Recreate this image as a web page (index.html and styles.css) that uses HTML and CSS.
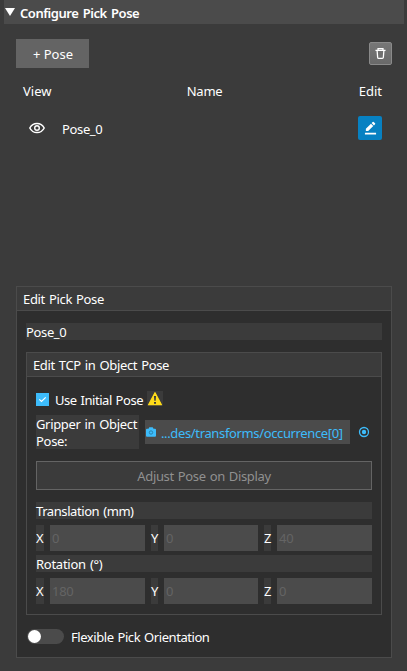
FILE: index.html
```
<!DOCTYPE html>
<html lang="en">
<head>
<meta charset="utf-8">
<title>Configure Pick Pose</title>
<link rel="stylesheet" href="styles.css">
</head>
<body>
<header class="section-bar">
  <svg class="arrow" width="10" height="8" viewBox="0 0 10 8"><path d="M0 0H10L5 8Z" fill="#fff"/></svg>
  <h1><span class="t-title">Configure Pick Pose</span></h1>
</header>
<main>
  <div class="toolbar">
    <button class="add"><span class="t-add">+ Pose</span></button>
    <button class="trash" aria-label="Delete">
      <svg width="11" height="13" viewBox="0 0 12 14" fill="none" stroke="#fff" stroke-width="1.4"><path d="M.5 3.500H11.500M3.300 3.300V1.600H8.700V3.300M2.300 3.800L2.900 11.400Q3 12.400 4 12.400H8Q9 12.400 9.100 11.400L9.700 3.800"/></svg>
    </button>
  </div>
  <div class="columns"><span class="t-view">View</span><span class="t-name">Name</span><span class="t-edit">Edit</span></div>
  <div class="pose-row">
    <svg class="eye" width="16" height="12" viewBox="0 0 16 12" fill="none" stroke="#fff"><path d="M.8 6C2.400 2.900 4.900 1.400 8 1.400S13.600 2.900 15.200 6C13.600 9.100 11.100 10.600 8 10.600S2.400 9.100.8 6Z" stroke-width="1.500"/><circle cx="8" cy="6" r="2.300" stroke-width="1.400"/></svg>
    <span class="pose-name t-pose">Pose_0</span>
    <button class="edit" aria-label="Edit pose">
      <svg width="13" height="14" viewBox="0 0 14 14" fill="#fff"><path d="M1 12H13V14H1ZM2 10.200V7.700L7.500 2.400L10 4.900L4.500 10.200ZM8.200 1.700L9.400.5Q9.900 0 10.400.5L11.900 2Q12.400 2.500 11.900 3L10.700 4.200Z"/></svg>
    </button>
  </div>
  <section class="group outer">
    <h2><span class="t-pick">Edit Pick Pose</span></h2>
    <div class="outer-body">
      <div class="strip"><span class="t-pose">Pose_0</span></div>
      <section class="group inner">
        <h2><span class="t-tcp">Edit TCP in Object Pose</span></h2>
        <div class="inner-body">
          <div class="initial">
            <svg class="check" width="13" height="13" viewBox="0 0 13 13"><path d="M0 0H13V13H0Z" fill="#3dbcfb"/><path d="M3.300 6.300L5.500 8.500L9.700 4.400" fill="none" stroke="#fff" stroke-width="1.200"/></svg>
            <span class="t-initial">Use Initial Pose</span>
            <svg class="warn" width="16" height="15" viewBox="0 0 16 15"><path d="M8 1.800L14.400 13.700H1.600Z" fill="#ffdc19" stroke="#ffdc19" stroke-width="1.300" stroke-linejoin="round"/><path d="M7 5H9L8.700 9.800H7.300ZM7 11H9V12.800H7Z" fill="#3b3b3b"/></svg>
          </div>
          <div class="gripper">
            <div class="label"><span class="t-gripper">Gripper in Object</span><br><span class="t-colon">Pose:</span></div>
            <div class="path">
              <svg width="10" height="10" viewBox="0 0 10 10"><path d="M1 1.700H2.500L3.300.3H6.700L7.500 1.700H9Q10 1.700 10 2.700V8.700Q10 9.700 9 9.700H1Q0 9.700 0 8.700V2.700Q0 1.700 1 1.700Z" fill="#3dbcfb"/><circle cx="5" cy="5.500" r="1.700" fill="#3dbcfb" stroke="#287da5" stroke-width=".9"/></svg>
              <span class="t-path">...des/transforms/occurrence[0]</span>
            </div>
            <svg class="target" width="12" height="12" viewBox="0 0 12 12"><circle cx="6" cy="6" r="4.500" fill="none" stroke="#3dbcfb" stroke-width="1.300"/><circle cx="6" cy="6" r="2.200" fill="#3dbcfb"/></svg>
          </div>
          <button class="adjust"><span class="t-adjust">Adjust Pose on Display</span></button>
          <div class="strip"><span class="t-trans">Translation (mm)</span></div>
          <div class="axes"><label>X</label><div class="value">0</div><label>Y</label><div class="value">0</div><label>Z</label><div class="value">40</div></div>
          <div class="strip"><span class="t-rot">Rotation (°)</span></div>
          <div class="axes last"><label>X</label><div class="value wide">180</div><label>Y</label><div class="value">0</div><label>Z</label><div class="value">0</div></div>
        </div>
      </section>
      <div class="flexible"><span class="switch"><i></i></span><span class="t-flex">Flexible Pick Orientation</span></div>
    </div>
  </section>
</main>
</body>
</html>
```
FILE: styles.css
```
* { box-sizing: border-box; }
body {
  margin: 0;
  height: 671px;
  overflow: hidden;
  background: #3b3b3b;
  color: #fff;
  font: 13px/17px "Noto Sans", "Open Sans", sans-serif;
  white-space: nowrap;
}
h1, h2 { margin: 0; font-size: 13px; }
h2 { font-weight: 400; }
button { font: inherit; color: inherit; padding: 0; border: 0; display: flex; align-items: center; justify-content: center; }
svg { display: block; flex: none; }

.section-bar { display: flex; height: 24px; margin: 0 3px 0 4px; background: #4b4b4b; }
.section-bar .arrow { margin: 8px 5px 0 1px; }
.section-bar h1 { font-weight: 600; padding-top: 5px; }

main { padding: 15px 15px 0 16px; }
.toolbar { display: flex; justify-content: space-between; align-items: center; height: 29px; }
.add { width: 73px; height: 29px; background: #646464; padding: 2px 0 0 1px; }
.trash { width: 23px; height: 23px; margin-top: -1px; border: 1px solid #8a8a8a; border-radius: 2px; background: linear-gradient(#777, #696969); }
.columns { display: flex; justify-content: space-between; margin: 14px 10px 0 7px; height: 18px; line-height: 18px; }
.pose-row { display: flex; align-items: center; height: 24px; margin: 16px 10px 0 13px; }
.pose-name { margin: 2px auto 0 17px; }
.edit { width: 24px; height: 24px; border-radius: 2px; background: #0781c2; }

.group { border: 1px solid #4b4b4b; background: #2e2e2e; }
.group h2 { height: 24px; padding: 4px 6px 0; border-bottom: 1px solid #4b4b4b; background: #3b3b3b; }
.outer { height: 372px; margin-top: 146px; }
.outer-body { padding: 12px 9px 0; }
.strip { height: 17px; padding-top: 1px; background: #3b3b3b; }
.inner { margin-top: 12px; height: 263px; }
.inner-body { padding: 14px 9px 0; }
.initial { display: flex; width: 127px; height: 15px; }
.check { margin: 2px 6px 0 0; }
.warn { margin-left: auto; background: #3b3b3b; }
.gripper { display: flex; align-items: center; margin-top: 9px; height: 34px; }
.label { width: 103px; height: 34px; padding-top: 1px; background: #3b3b3b; }
.path { display: flex; align-items: center; width: 205px; height: 24px; margin-left: 6px; padding-left: 1px; background: #4b4b4b; color: #3dbcfb; }
.path svg { margin: 0 5px 1px 0; }
.target { margin-left: 8px; }
.adjust { width: 336px; height: 29px; margin: 12px 0; padding-top: 2px; border: 1px solid #646464; background: #3b3b3b; color: #909090; }
.axes { display: grid; grid-template-columns: 8px 95px 7px 94px 7px 95px; column-gap: 6px; height: 24px; margin: 6px 0; }
.axes.last { margin-bottom: 0; }
.axes label { background: #3b3b3b; line-height: 26px; }
.value { background: #4b4b4b; color: #646464; padding-left: 2px; line-height: 26px; letter-spacing: -.3px; }
.flexible { display: flex; align-items: center; margin-top: 13px; height: 17px; }
.switch { width: 37px; height: 15px; margin: 0 7px 0 1px; border-radius: 8px; background: #4b4b4b; padding: 1px; }
.switch i { display: block; width: 13px; height: 13px; border-radius: 50%; background: #fff; }

/* Compact tracking with open word gaps */
[class^="t-"], .t-pose { display: inline-block; }
.t-title { letter-spacing: -.46px; word-spacing: 1.4px; }
.t-name { letter-spacing: -.2px; margin-left: -1px; }
.t-pose, .t-path { letter-spacing: -.36px; }
.t-path { padding-top: 2px; }
.t-initial { padding-top: 1px; letter-spacing: -.46px; word-spacing: .9px; }
.t-trans { letter-spacing: -.42px; word-spacing: 1px; }
.t-flex { padding-top: 2px; letter-spacing: -.44px; word-spacing: 1px; }
.t-pick { letter-spacing: -.34px; word-spacing: 1px; }
.t-tcp { letter-spacing: -.36px; word-spacing: 1px; }
.t-gripper { letter-spacing: -.34px; word-spacing: 1px; }
.t-adjust { letter-spacing: -.36px; word-spacing: 1px; }
.t-rot { letter-spacing: -.26px; word-spacing: 1px; }
.t-colon { letter-spacing: -.3px; }
```
